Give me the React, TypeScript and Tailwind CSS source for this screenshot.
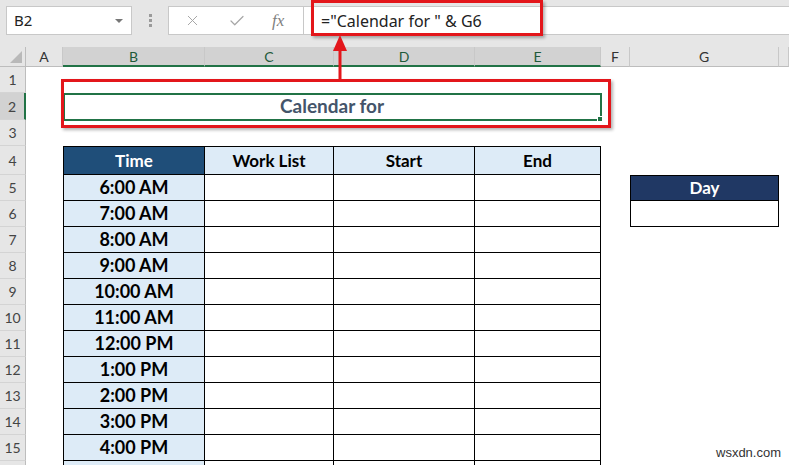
import { X, Check } from "lucide-react";

const cols = ["A", "B", "C", "D", "E", "F", "G", ""];
const times = [
  "6:00 AM",
  "7:00 AM",
  "8:00 AM",
  "9:00 AM",
  "10:00 AM",
  "11:00 AM",
  "12:00 PM",
  "1:00 PM",
  "2:00 PM",
  "3:00 PM",
  "4:00 PM",
  "",
];

const RowHead = ({ n, active }: { n: number; active?: boolean }) => (
  <div
    className={
      "flex items-center justify-center text-[14px] text-[#444] border-b border-[#d4d4d4] " +
      (active
        ? "bg-[#d2d2d2] border-r-2 border-r-[#217346]"
        : "bg-[#e6e6e6] border-r border-r-[#bdbdbd]")
    }
    style={{ gridColumn: 1, gridRow: n + 1 }}
  >
    {n < 16 ? n : ""}
  </div>
);

const App = () => {
  return (
    <div className="relative w-[789px] h-[465px] overflow-hidden bg-white font-['Lato',sans-serif]">
      {/* formula bar */}
      <div className="flex items-start h-[47px] bg-[#e6e6e6] pt-[6px] pl-[6px]">
        <div className="flex items-center justify-between w-[126px] h-[29px] bg-white border border-[#c8c8c8] pl-[7px] pr-[8px] font-['Noto_Sans',sans-serif] text-[15px] text-[#222]">
          B2
          <span className="w-0 h-0 border-x-[4px] border-x-transparent border-t-[4px] border-t-[#777]" />
        </div>
        <div className="flex flex-col gap-[2px] ml-[17px] mt-[8px]">
          <span className="w-[3px] h-[3px] bg-[#9a9a9a]" />
          <span className="w-[3px] h-[3px] bg-[#9a9a9a]" />
          <span className="w-[3px] h-[3px] bg-[#9a9a9a]" />
        </div>
        <div className="flex items-center w-[136px] h-[29px] ml-[16px] bg-white border border-[#c8c8c8] text-[#a6a6a6]">
          <X size={17} strokeWidth={1.4} className="ml-[15px]" />
          <Check size={18} strokeWidth={1.6} className="ml-[27px]" />
          <span className="ml-[26px] font-['Liberation_Serif',serif] italic text-[17px] text-[#7f7f7f]">
            fx
          </span>
        </div>
        <div className="flex items-center flex-1 h-[29px] bg-white border-y border-[#c8c8c8] pl-[17px] font-['Noto_Sans',sans-serif] text-[16px] text-[#222]">
          ="Calendar for " &amp; G6
        </div>
      </div>

      {/* sheet */}
      <div className="grid grid-cols-[26px_37px_142px_129px_141px_126px_29px_149px_1fr] grid-rows-[20px_26px_27px_26px_29px_repeat(12,26px)]">
        <div className="relative bg-[#e6e6e6] border-r border-b border-[#bdbdbd]">
          <span className="absolute right-[3px] bottom-[3px] w-0 h-0 border-l-[12px] border-l-transparent border-b-[12px] border-b-[#b9b9b9]" />
        </div>
        {cols.map((c, i) => {
          const sel = i >= 1 && i <= 4;
          return (
            <div
              key={c + i}
              className={
                "flex items-center justify-center text-[14px] border-r border-[#c8c8c8] " +
                (sel
                  ? "bg-[#d2d2d2] text-[#1e5a3a] border-b-2 border-b-[#217346]"
                  : "bg-[#e6e6e6] text-[#333] border-b border-b-[#bdbdbd]")
              }
            >
              {c}
            </div>
          );
        })}

        {Array.from({ length: 16 }, (_, i) => (
          <RowHead key={i} n={i + 1} active={i === 1} />
        ))}

        {/* merged B2:E2 */}
        <div
          className="flex items-center justify-center text-[19px] font-bold text-[#44546a]"
          style={{ gridColumn: "3 / span 4", gridRow: 3 }}
        >
          Calendar for
        </div>

        {/* table header */}
        <div
          className="flex items-center justify-center bg-[#1f4e79] text-white text-[17px] font-bold border border-black"
          style={{ gridColumn: 3, gridRow: 5 }}
        >
          Time
        </div>
        {["Work List", "Start", "End"].map((h, i) => (
          <div
            key={h}
            className="flex items-center justify-center bg-[#ddebf7] text-black text-[17px] font-bold border-y border-r border-black"
            style={{ gridColumn: 4 + i, gridRow: 5 }}
          >
            {h}
          </div>
        ))}

        {times.map((t, r) => (
          <div key={r} className="contents">
            <div
              className="flex items-center justify-center bg-[#ddebf7] text-black text-[18px] font-bold border-x border-b border-black"
              style={{ gridColumn: 3, gridRow: 6 + r }}
            >
              {t}
            </div>
            {[0, 1, 2].map((c) => (
              <div
                key={c}
                className="border-r border-b border-black"
                style={{ gridColumn: 4 + c, gridRow: 6 + r }}
              />
            ))}
          </div>
        ))}

        {/* Day box */}
        <div
          className="flex items-center justify-center bg-[#203864] text-white text-[17px] font-bold border border-black"
          style={{ gridColumn: 8, gridRow: 6 }}
        >
          Day
        </div>
        <div
          className="border-x border-b border-black"
          style={{ gridColumn: 8, gridRow: 7 }}
        />
      </div>

      {/* selection outline and fill handle */}
      <div className="absolute left-[63px] top-[93px] w-[539px] h-[28px] border-2 border-[#217346]" />
      <div className="absolute left-[597px] top-[116px] w-[6px] h-[6px] bg-[#217346] border border-white" />

      {/* red callouts */}
      <div className="absolute left-[311px] top-0 w-[232px] h-[36px] border-[3px] border-[#e3161b] shadow-[2px_2px_3px_rgba(0,0,0,0.3)]" />
      <div className="absolute left-[61px] top-[79px] w-[550px] h-[49px] border-[3px] border-[#e3161b] shadow-[2px_2px_3px_rgba(0,0,0,0.3)]" />
      <svg className="absolute left-[330px] top-[35px]" width="20" height="46" viewBox="0 0 20 46">
        <polygon points="10,0 3,16 17,16" fill="#e3161b" />
        <rect x="8.5" y="14" width="3" height="32" fill="#e3161b" />
      </svg>

      <div className="absolute left-[716px] top-[443px] font-['Liberation_Sans',sans-serif] text-[13px] text-[#333]">
        wsxdn.com
      </div>
    </div>
  );
};

export default App;
